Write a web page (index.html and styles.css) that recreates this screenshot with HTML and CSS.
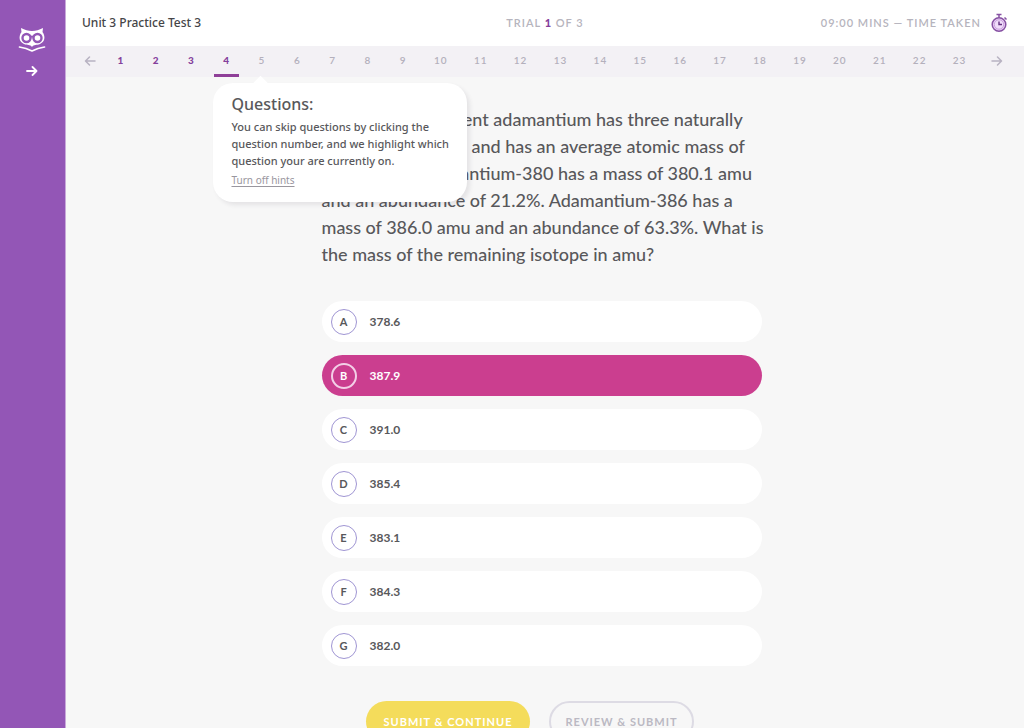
FILE: index.html
```html
<!DOCTYPE html>
<html lang="en">
<head>
<meta charset="utf-8">
<meta name="viewport" content="width=device-width, initial-scale=1">
<title>Unit 3 Practice Test 3</title>
<link rel="stylesheet" href="styles.css">
</head>
<body>
<div class="app">
  <aside class="sidebar">
    <a class="logo" href="#" aria-label="Home">
      <svg width="28" height="26" viewBox="0 0 28 26" fill="none" stroke="#fff" stroke-linecap="round" stroke-linejoin="round">
        <path fill="#fff" stroke="none" d="M3 1C7 3 10 4 14 4C18 4 21 3 25 1L24.500 5C28 10 26.500 15 22 17C18.500 18.500 16 17 14 20C12 17 9.500 18.500 6 17C1.500 15 0 10 3.500 5Z"/>
        <g stroke="#9356b6" stroke-width="2.400"><circle cx="8.500" cy="11" r="4"/><circle cx="19.500" cy="11" r="4"/></g>
        <path fill="#9356b6" stroke="none" d="M12 7.500L14 9L16 7.500L14 12Z"/>
        <path stroke-width="1.700" d="M1.500 20L8 21.500L14 24L20 21.500L26.500 20"/>
      </svg>
    </a>
    <button class="expand" type="button" aria-label="Expand menu">
      <svg width="12" height="10" viewBox="0 0 12 10" fill="none" stroke="#fff" stroke-width="1.800" stroke-linecap="round" stroke-linejoin="round"><path d="M1 5H10M6.500 1L10.500 5L6.500 9"/></svg>
    </button>
  </aside>
  <div class="page">
    <header class="topbar">
      <h1 class="title">Unit 3 Practice Test 3</h1>
      <p class="caps trial">Trial <b>1</b> of 3</p>
      <p class="caps timer">09:00 mins — time taken
        <svg width="18" height="20" viewBox="0 0 18 20" fill="none" stroke="#8651a3">
          <circle cx="9" cy="11.500" r="6.800" fill="#e9cdf4" stroke-width="1.500"/>
          <circle cx="9" cy="11.500" r="4.700" fill="#f0dcfa" stroke="#c9a2dd" stroke-width="1"/>
          <path stroke-width="1.500" d="M6.500 1.500H11.500M9 1.500V4.500M14.500 4.500L16.500 6.500"/>
          <path stroke="#623080" stroke-width="1.400" d="M9 8.500V11.500H12"/>
        </svg>
      </p>
    </header>
    <nav class="pager" aria-label="Questions">
      <button class="step" type="button" aria-label="Previous"><svg width="12" height="10" viewBox="0 0 12 10"><path d="M11 5H2M5.500 1L1.500 5L5.500 9"/></svg></button>
      <a class="num done" href="#">1</a>
      <a class="num done" href="#">2</a>
      <a class="num done" href="#">3</a>
      <a class="num done current" href="#" aria-current="step">4</a>
      <div class="anchor">
        <a class="num" href="#">5</a>
        <section class="hint">
          <h2 class="hint-title">Questions:</h2>
          <p class="hint-text">You can skip questions by clicking the question number, and we highlight which question your are currently on.</p>
          <button class="hint-off" type="button">Turn off hints</button>
        </section>
      </div>
      <a class="num" href="#">6</a>
      <a class="num" href="#">7</a>
      <a class="num" href="#">8</a>
      <a class="num" href="#">9</a>
      <a class="num" href="#">10</a>
      <a class="num" href="#">11</a>
      <a class="num" href="#">12</a>
      <a class="num" href="#">13</a>
      <a class="num" href="#">14</a>
      <a class="num" href="#">15</a>
      <a class="num" href="#">16</a>
      <a class="num" href="#">17</a>
      <a class="num" href="#">18</a>
      <a class="num" href="#">19</a>
      <a class="num" href="#">20</a>
      <a class="num" href="#">21</a>
      <a class="num" href="#">22</a>
      <a class="num" href="#">23</a>
      <button class="step next" type="button" aria-label="Next"><svg width="12" height="10" viewBox="0 0 12 10"><path d="M1 5H10M6.500 1L10.500 5L6.500 9"/></svg></button>
    </nav>
    <main class="content">
      <form class="quiz">
        <p class="question">The fictional element adamantium has three naturally<br>occurring isotopes and has an average atomic mass of<br>384.4 amu. Adamantium-380 has a mass of 380.1 amu<br>and an abundance of 21.2%. Adamantium-386 has a<br>mass of 386.0 amu and an abundance of 63.3%. What is<br>the mass of the remaining isotope in amu?</p>
        <div class="options">
          <label class="option"><input class="pick" type="radio" name="answer"><span class="letter">A</span>378.6</label>
          <label class="option"><input class="pick" type="radio" name="answer" checked><span class="letter">B</span>387.9</label>
          <label class="option"><input class="pick" type="radio" name="answer"><span class="letter">C</span>391.0</label>
          <label class="option"><input class="pick" type="radio" name="answer"><span class="letter">D</span>385.4</label>
          <label class="option"><input class="pick" type="radio" name="answer"><span class="letter">E</span>383.1</label>
          <label class="option"><input class="pick" type="radio" name="answer"><span class="letter">F</span>384.3</label>
          <label class="option"><input class="pick" type="radio" name="answer"><span class="letter">G</span>382.0</label>
        </div>
        <div class="actions">
          <button class="btn primary" type="button">Submit &amp; continue</button>
          <button class="btn ghost" type="button">Review &amp; submit</button>
        </div>
      </form>
    </main>
  </div>
</div>
</body>
</html>
```
FILE: styles.css
```css
* { box-sizing: border-box; }
body { margin: 0; font-family: Lato, "Noto Sans", sans-serif; color: #58585b; background: #f7f7f7; }
h1, h2, p { margin: 0; }
a { text-decoration: none; color: inherit; }
button { font: inherit; color: inherit; background: none; border: 0; padding: 0; cursor: pointer; }
svg { display: block; }

.app { display: flex; height: 100vh; }
.sidebar { flex: none; width: 66px; padding-top: 27px; background: #9356b6; border-right: 1px solid #c9a9da; display: flex; flex-direction: column; align-items: center; gap: 13px; }
.sidebar .logo { margin-right: 2px; }
.sidebar .expand { margin-right: 2px; }
.page { flex: 1; min-width: 0; display: flex; flex-direction: column; }

.topbar { flex: none; height: 46px; padding: 0 16px; background: #fff; display: grid; grid-template-columns: 1fr auto 1fr; align-items: center; }
.title { font: 500 12px/16px "Noto Sans", sans-serif; color: #454548; }
.caps { font-size: 11px; line-height: 16px; font-weight: 600; letter-spacing: 1px; text-transform: uppercase; color: #b6b4bd; }
.caps b { color: #84409c; font-weight: 900; }
.timer { display: flex; align-items: center; justify-content: flex-end; gap: 9px; }

.pager { flex: none; height: 31px; padding: 0 20px 0 16px; background: #f3f1f5; display: flex; justify-content: space-between; position: relative; z-index: 1; }
.step { padding: 0 2px 1px; }
.next { padding: 0 1px 1px 6px; }
.step svg { fill: none; stroke: #b8b2c2; stroke-width: 1.5px; stroke-linecap: round; stroke-linejoin: round; }
.num { display: block; height: 31px; padding: 0 8px; min-width: 25px; text-align: center; font-size: 10px; line-height: 29px; font-weight: 600; letter-spacing: 1px; color: #b4b0bc; }
.done { color: #84409c; font-weight: 900; }
.current { border-bottom: 3px solid #8f3f98; }
.anchor { position: relative; }

.hint { position: absolute; top: 37px; left: -36px; width: 254px; padding: 11px 14px 15px 18px; background: #fff; border-radius: 20px; box-shadow: 3px 3px 4px rgba(70, 60, 80, .1); font-family: "Noto Sans", sans-serif; }
.hint::before { content: ""; position: absolute; left: 42px; top: -5px; width: 11px; height: 11px; background: #fff; transform: rotate(45deg); }
.hint-title { font-size: 16px; line-height: 20px; font-weight: 500; margin-bottom: 4px; }
.hint-text { font-size: 11px; line-height: 17px; font-weight: 500; }
.hint-off { display: block; margin-top: 4px; font-size: 10px; line-height: 14px; color: #99969e; text-decoration: underline; text-underline-offset: 2px; }

.content { flex: 1; min-height: 0; overflow-y: auto; scrollbar-width: none; padding: 29px 7px 24px 0; }
.quiz { width: 46%; min-width: 440px; margin: 0 auto; }
.question { font-size: 18px; line-height: 27px; font-weight: 500; white-space: nowrap; }
.options { display: flex; flex-direction: column; gap: 13px; margin-top: 33px; }
.option { position: relative; display: flex; align-items: center; gap: 13px; height: 41px; padding: 0 9px; border-radius: 21px; background: #fff; font-size: 12px; font-weight: 700; cursor: pointer; }
.pick { position: absolute; inset: 0; margin: 0; opacity: 0; }
.letter { width: 26px; height: 26px; border: 1px solid #9f95d3; border-radius: 50%; display: flex; align-items: center; justify-content: center; font-size: 11px; font-weight: 700; }
.option:has(:checked) { background: #cb3e8f; color: #fff; }
.option:has(:checked) .letter { border: 2px solid #f3cfe7; }
.actions { display: flex; gap: 19px; margin: 35px 0 0 44px; }
.btn { height: 41px; padding: 0 18px; border-radius: 21px; font-size: 11px; font-weight: 700; letter-spacing: 1px; text-transform: uppercase; white-space: nowrap; }
.primary { background: #f4dc5b; color: #fff; }
.ghost { border: 2px solid #dddbe4; color: #bbb9c3; padding: 0 14px; }
```
